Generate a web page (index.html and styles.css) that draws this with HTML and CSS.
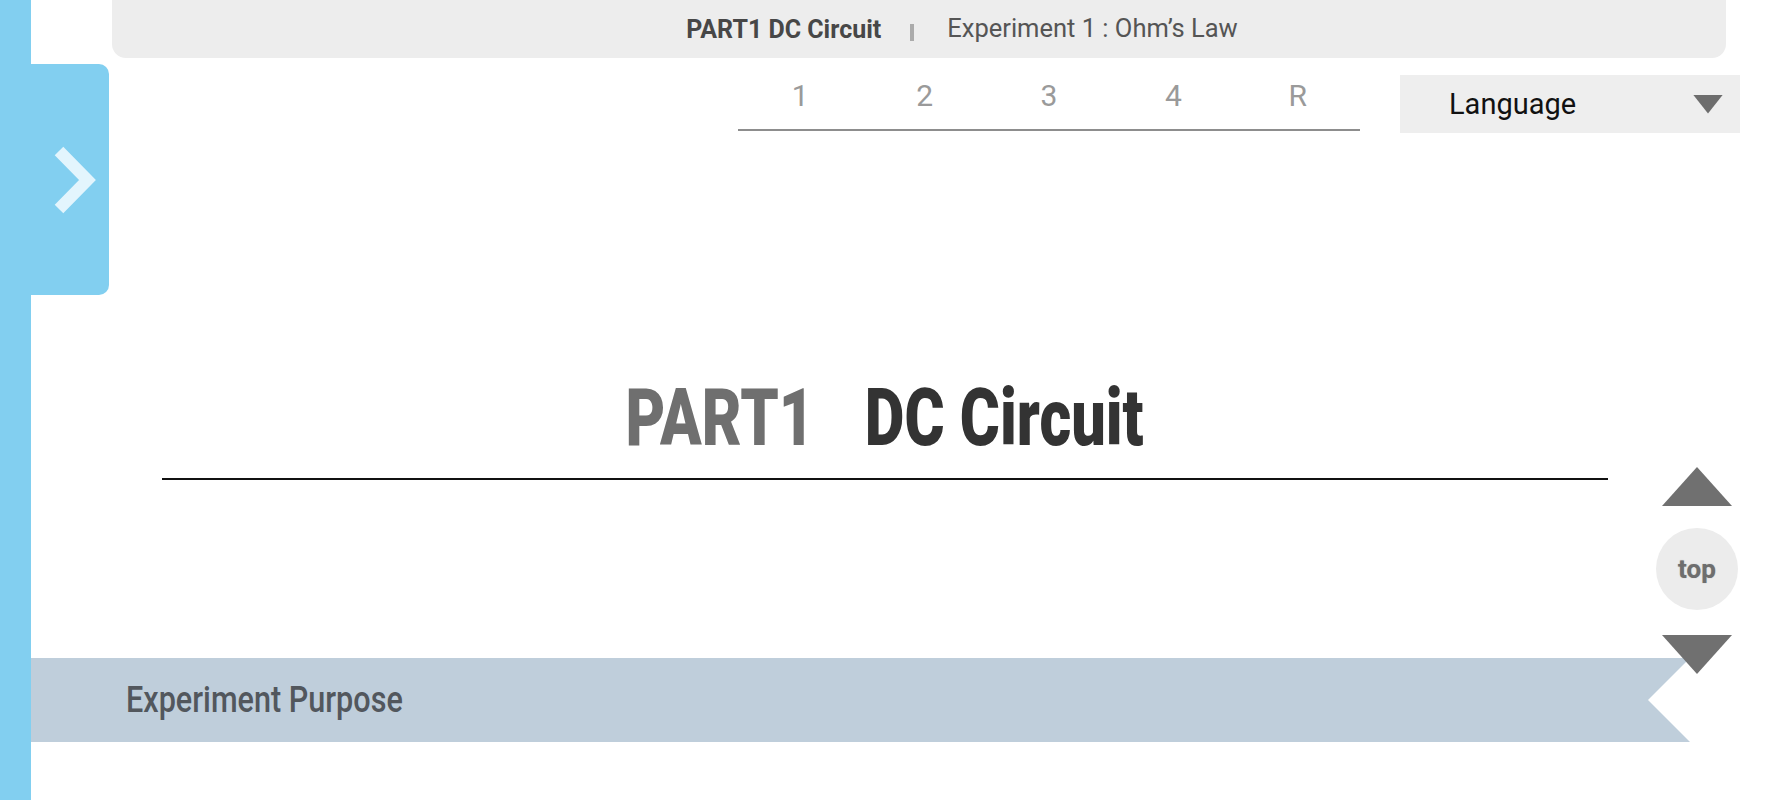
FILE: index.html
```html
<!DOCTYPE html>
<html lang="en">
<head>
<meta charset="utf-8">
<title>PART1 DC Circuit - Experiment 1 : Ohm’s Law</title>
<link rel="stylesheet" href="styles.css">
</head>
<body>
<div class="app">
  <aside class="rail"></aside>
  <main class="content">
    <header class="crumb">
      <span class="crumb-part">PART1 DC Circuit</span>
      <span class="crumb-sep"></span>
      <span class="crumb-exp">Experiment 1 : Ohm’s Law</span>
    </header>
    <div class="toolbar">
      <nav class="steps">
        <a href="#">1</a>
        <a href="#">2</a>
        <a href="#">3</a>
        <a href="#">4</a>
        <a href="#">R</a>
      </nav>
      <div class="lang">
        <span>Language</span>
        <span class="caret"></span>
      </div>
    </div>
    <section class="title-wrap">
      <h1 class="title"><span class="part">PART1</span><span class="name">DC Circuit</span></h1>
    </section>
    <div class="banner">
      <h2 class="banner-title">Experiment Purpose</h2>
    </div>
  </main>
  <button class="drawer-tab" type="button" aria-label="Open menu">
    <svg class="chevron" width="78" height="231" viewBox="0 0 78 231">
      <polyline points="28,87 56.5,116 28,145" fill="none" stroke="#e3f5fd" stroke-width="12" stroke-linejoin="miter" stroke-linecap="butt"/>
    </svg>
  </button>
  <div class="scroll-ctl">
    <span class="arrow arrow-up"></span>
    <span class="top-btn">top</span>
    <span class="arrow arrow-down"></span>
  </div>
</div>
</body>
</html>
```
FILE: styles.css
```css
* { box-sizing: border-box; }
html, body {
  margin: 0;
  height: 100%;
  overflow: hidden;
  background: #fff;
  font-family: Roboto, "Liberation Sans", sans-serif;
}
.app {
  display: flex;
  min-height: 100vh;
  position: relative;
}
.rail {
  width: 31px;
  flex: none;
  background: #82cff0;
}
.content {
  flex: 1;
  min-width: 0;
  display: flex;
  flex-direction: column;
}
.crumb {
  margin: 0 52px 0 81px;
  height: 58px;
  background: #ededed;
  border-radius: 0 0 14px 14px;
  display: flex;
  align-items: center;
  justify-content: center;
  padding-left: 86px;
  font-size: 25px;
  line-height: 1;
}
.crumb-part { font-weight: 700; color: #474747; }
.crumb-sep {
  width: 4px;
  height: 17px;
  background: #ababab;
  margin: 7px 33px 0 29px;
}
.crumb-exp { color: #555; font-size: 25.5px; }
.toolbar {
  display: flex;
  justify-content: flex-end;
  align-items: flex-start;
  gap: 40px;
  margin-top: 17px;
  padding-right: 38px;
}
.steps {
  display: flex;
  width: 622px;
  border-bottom: 2px solid #8d8d8d;
  padding-bottom: 12px;
}
.steps a {
  flex: 1;
  text-align: center;
  font-size: 30px;
  line-height: 42px;
  color: #9a9a9a;
  text-decoration: none;
}
.lang {
  width: 340px;
  height: 58px;
  background: #eee;
  display: flex;
  align-items: center;
  justify-content: space-between;
  padding: 0 17px 0 49px;
  font-size: 29px;
  color: #111;
}
.caret {
  width: 30px;
  height: 19px;
  background: #6d6d6d;
  clip-path: polygon(0 0, 100% 0, 50% 100%);
}
.title-wrap {
  margin: 245px 170px 0 131px;
  border-bottom: 2px solid #111;
  padding-bottom: 20px;
  display: flex;
  justify-content: center;
}
.title {
  margin: 0;
  font-size: 80px;
  line-height: 1;
  font-weight: 900;
  white-space: nowrap;
  transform: scaleX(0.765);
}
.part { color: #6f6f6f; margin-right: 66px; }
.name { color: #333; }
.banner {
  margin: 178px 88px 0 0;
  height: 84px;
  background: #bfcedb;
  clip-path: polygon(0 0, 100% 0, calc(100% - 42px) 50%, 100% 100%, 0 100%);
  display: flex;
  align-items: center;
  padding-left: 95px;
}
.banner-title {
  margin: 0;
  font-size: 36px;
  font-weight: 500;
  line-height: 1;
  color: #52575d;
  white-space: nowrap;
  transform: scaleX(0.85);
  transform-origin: left center;
}
.drawer-tab {
  position: absolute;
  left: 31px;
  top: 64px;
  width: 78px;
  height: 231px;
  padding: 0;
  border: 0;
  background: #82cff0;
  border-radius: 0 10px 10px 0;
  display: flex;
}
.scroll-ctl {
  position: absolute;
  left: 1656px;
  top: 467px;
  width: 82px;
  display: flex;
  flex-direction: column;
  align-items: center;
}
.arrow {
  display: block;
  width: 70px;
  height: 39px;
  background: #707070;
}
.arrow-up { clip-path: polygon(50% 0, 100% 100%, 0 100%); }
.arrow-down { clip-path: polygon(0 0, 100% 0, 50% 100%); }
.top-btn {
  margin: 22px 0 25px;
  width: 82px;
  height: 82px;
  border-radius: 50%;
  background: #ececec;
  display: flex;
  align-items: center;
  justify-content: center;
  font-size: 26px;
  font-weight: 700;
  color: #6e6e6e;
  text-shadow: 0 0 1px rgba(110, 110, 110, 0.6);
}
```
